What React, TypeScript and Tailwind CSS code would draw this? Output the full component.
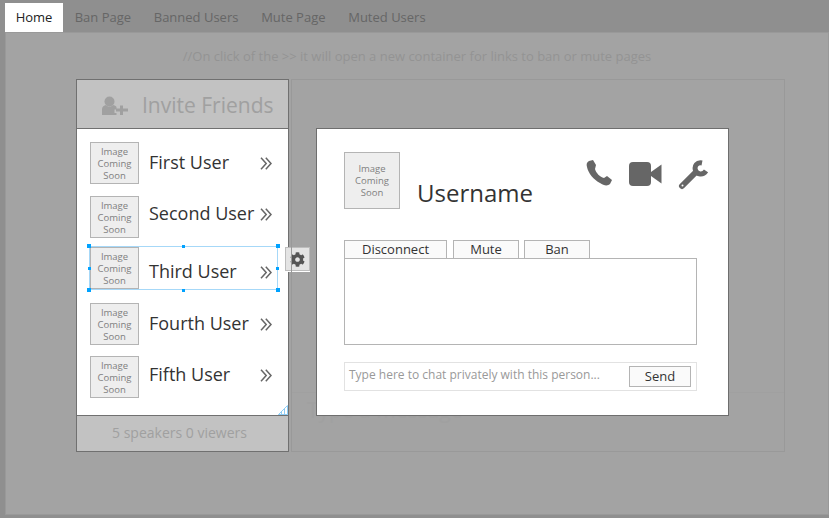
import React from "react";
import { FaCog } from "react-icons/fa";

function Placeholder({ big }: { big?: boolean }) {
  return (
    <div
      className={
        big
          ? "flex h-[57px] w-[56px] shrink-0 items-center justify-center border border-[#b4b4b4] bg-[#eeeeee] pt-[1px] text-center text-[9.5px] leading-[12px] text-[#808080]"
          : "flex h-[42px] w-[49px] shrink-0 items-center justify-center border border-[#b4b4b4] bg-[#eeeeee] pt-[1px] text-center text-[9.5px] leading-[12px] text-[#808080]"
      }
    >
      <span>
        Image
        <br />
        Coming
        <br />
        Soon
      </span>
    </div>
  );
}

const users = [
  { name: "First User", mt: "mt-[13px]", text: "pb-[2px]", chev: "" },
  { name: "Second User", mt: "mt-[12px]", text: "pb-[8px]", chev: "mb-[6px]" },
  { name: "Third User", mt: "mt-[9px]", text: "pt-[6px]", chev: "mt-[8px]" },
  { name: "Fourth User", mt: "mt-[14px]", text: "pb-[2px]", chev: "" },
  { name: "Fifth User", mt: "mt-[11px]", text: "pb-[6px]", chev: "mb-[4px]" },
];

function Handle({ className }: { className: string }) {
  return <span className={"absolute bg-[#00a2ff] " + className} />;
}

function Chevrons({ className }: { className: string }) {
  return (
    <svg className={"shrink-0 " + className} width="12" height="13" viewBox="0 0 12 13" fill="none" stroke="#666666" strokeWidth="1.5">
      <path d="M1 .8 6.2 6.5 1 12.2" />
      <path d="M5.8 .8 11 6.5 5.8 12.2" />
    </svg>
  );
}

function UserRow({ name, mt, text, chev, selected }: { name: string; mt: string; text: string; chev: string; selected?: boolean }) {
  return (
    <div className={"relative flex items-center pl-[13px] pr-[16px] " + mt}>
      <Placeholder />
      <span className={"ml-[10px] flex-1 whitespace-nowrap text-[18px] leading-[26px] text-[#333333] " + text}>{name}</span>
      <Chevrons className={chev} />
      {selected && (
        <>
          <div className="absolute -top-[1px] left-[12px] right-[10px] h-[44px] border border-[#a6d8f8]" />
          <Handle className="-top-[3px] left-[10px] h-[4px] w-[4px]" />
          <Handle className="-top-[2px] left-[105px] h-[3px] w-[3px]" />
          <Handle className="-top-[3px] right-[8px] h-[4px] w-[4px]" />
          <Handle className="top-[20px] left-[11px] h-[3px] w-[3px]" />
          <Handle className="top-[20px] right-[9px] h-[3px] w-[3px]" />
          <Handle className="top-[41px] left-[10px] h-[4px] w-[4px]" />
          <Handle className="top-[42px] left-[105px] h-[3px] w-[3px]" />
          <Handle className="top-[41px] right-[8px] h-[4px] w-[4px]" />
          <div className="absolute -right-[22px] top-0 flex h-[24px] w-[25px] items-center justify-center border border-[#bdbdbd] bg-[#e4e4e4] shadow-[0_1px_0_#ffffff]">
            <FaCog className="text-[15px] text-[#555555]" />
          </div>
        </>
      )}
    </div>
  );
}

function Tab({ label, active }: { label: string; active?: boolean }) {
  return (
    <div
      className={
        active
          ? "flex h-[29px] w-[58px] items-center justify-center bg-white text-[13px] text-[#222222]"
          : "flex h-[29px] items-center px-[11px] text-[13px] text-[#666666]"
      }
    >
      {label}
    </div>
  );
}

function ActionTab({ label, w }: { label: string; w: string }) {
  return (
    <div className={"flex h-[18px] items-center justify-center border border-b-0 border-[#b4b4b4] bg-[#fafafa] text-[13px] leading-none text-[#333333] " + w}>
      {label}
    </div>
  );
}

export default function App() {
  return (
    <div className="h-[518px] w-[829px] overflow-hidden bg-[#8f8f8f] font-['Open_Sans',sans-serif]">
      <div className="flex h-[32px] items-end gap-[0.7px] pl-[5px]">
        <Tab label="Home" active />
        <Tab label="Ban Page" />
        <Tab label="Banned Users" />
        <Tab label="Mute Page" />
        <Tab label="Muted Users" />
      </div>
      <div className="ml-[5px] h-[483px] border border-[#999999] bg-[#a3a3a3] pt-[15px]">
        <div className="text-center text-[13px] leading-[17px] text-[#939393]">
          //On click of the &gt;&gt; it will open a new container for links to ban or mute pages
        </div>
        <div className="ml-[70px] mt-[14px] flex h-[373px] w-[709px] gap-[2px]">
          <div className="flex w-[213px] flex-col border border-[#707070]">
            <div className="flex h-[48px] items-center bg-[#c2c2c2] pl-[25px] pt-[4px] text-[21px] text-[#a0a0a0]">
              <svg className="mr-[14px] shrink-0" width="26" height="20" viewBox="0 0 26 20" fill="#a0a0a0">
                <circle cx="7.5" cy="5.5" r="5" />
                <path d="M0 19V13C0 10.5 2 9.5 4 9 6 11 9 11 11 9 12.5 9.4 14 10 14.5 11V13.5H12.5V17H14.5V19Z" />
                <path d="M18 9.5H21V12.5H26V15.5H21V19H18V15.5H14V12.5H18Z" />
              </svg>
              Invite Friends
            </div>
            <div className="relative h-[288px] border-y border-[#707070] bg-white">
              {users.map((u) => (
                <UserRow key={u.name} name={u.name} mt={u.mt} text={u.text} chev={u.chev} selected={u.name === "Third User"} />
              ))}
              <svg className="absolute bottom-0 right-0" width="10" height="10" viewBox="0 0 10 10" fill="none" stroke="#8fcdf5" strokeWidth="1">
                <path d="M9.5 .5V9.5H.5Z" />
                <path d="M6.5 3.5V9.5M3.5 6.5V9.5M.5 9.5H9.5" />
              </svg>
            </div>
            <div className="flex flex-1 items-center justify-center bg-[#c2c2c2] pb-[2px] pr-[6px] text-[14px] text-[#a0a0a0]">
              5 speakers 0 viewers
            </div>
          </div>
          <div className="relative flex-1 border border-[#999999]">
            <div className="absolute left-0 right-0 top-[312px] border-t border-[#a0a0a0]" />
            <div className="absolute left-[15px] top-[316px] whitespace-nowrap text-[21px] leading-[28px] text-[#a0a0a0]">Type a message</div>
            <div className="absolute left-[24px] top-[48px] h-[288px] w-[413px] border border-[#6e6e6e] bg-white pl-[27px] pr-[31px] pt-[23px]">
              <div className="flex">
                <Placeholder big />
                <div className="ml-[17px] mt-[24px] text-[24px] leading-[33px] text-[#333333]">Username</div>
                <div className="absolute left-[269px] top-[31px] flex items-start text-[#666666]">
                  <svg width="26" height="26" viewBox="0 0 26 26" fill="#666666">
                    <path d="M3 1 7 0 10 5 9 9C10 13 14 17 18 18L21 16 26 20 24 24C22 26 18 26 14 23 8 20 2 13 1 7 0 4 1 2 3 1Z" />
                  </svg>
                  <svg className="ml-[17px] mt-[2px]" width="33" height="24" viewBox="0 0 33 24" fill="#666666">
                    <rect x="0" y="0" width="22" height="24" rx="4" />
                    <path d="M22 10 32.5 2.5V21.5L22 14Z" />
                  </svg>
                  <svg className="ml-[16px]" width="30" height="30" viewBox="0 0 30 30" fill="none" stroke="#666666">
                    <path d="M24 3C19 2 16 6 17.5 10.5 19 14.5 25 15.5 28 11" strokeWidth="5" />
                    <path d="M17 13 4 26" strokeWidth="6" strokeLinecap="round" />
                    <circle cx="4.5" cy="25.5" r="1" fill="#ffffff" stroke="none" />
                  </svg>
                </div>
              </div>
              <div className="mt-[31px] flex">
                <ActionTab label="Disconnect" w="w-[103px]" />
                <ActionTab label="Mute" w="ml-[6px] w-[66px]" />
                <ActionTab label="Ban" w="ml-[5px] w-[66px]" />
              </div>
              <div className="h-[87px] w-[353px] border border-[#b4b4b4] bg-white" />
              <div className="mt-[17px] flex h-[29px] w-[353px] items-center justify-between border border-[#e2e2e2] pl-[4px] pr-[5px] text-[12px] text-[#999999]">
                <span className="pb-[4px]">Type here to chat privately with this person...</span>
                <div className="flex h-[21px] w-[62px] items-center justify-center border border-[#b4b4b4] bg-[#fafafa] text-[13px] text-[#333333]">
                  Send
                </div>
              </div>
            </div>
          </div>
        </div>
      </div>
    </div>
  );
}
